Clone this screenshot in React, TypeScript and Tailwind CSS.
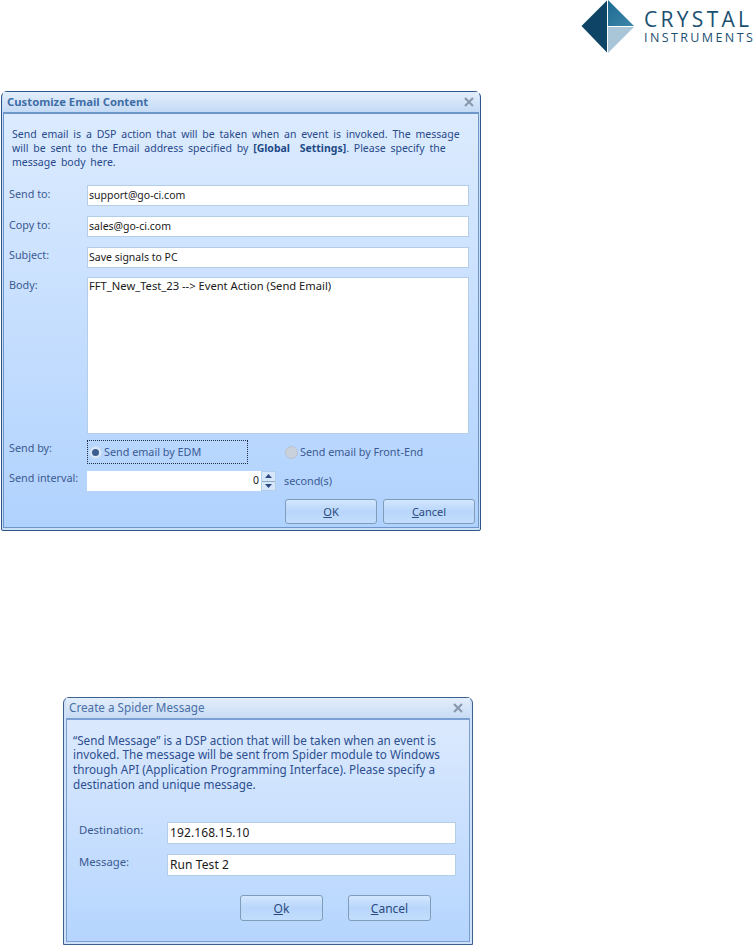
import React from "react";

const font = "font-['Noto_Sans','Open_Sans',sans-serif]";

function Logo() {
  return (
    <div className="flex h-[53px] justify-end">
      <div className="flex items-start">
        <svg width="54" height="53" viewBox="0 0 54 53" className="mr-[9px] block">
          <defs>
            <linearGradient id="tr" x1="0" y1="0" x2="1" y2="1">
              <stop offset="0" stopColor="#1d6a92" />
              <stop offset="1" stopColor="#3d87a8" />
            </linearGradient>
          </defs>
          <polygon points="0.5,26 26,0.5 26,52.5" fill="#0e4465" />
          <polygon points="27,0 53,26 27,26" fill="url(#tr)" />
          <polygon points="27,27 53,27 27,53" fill="#a9c5d8" />
        </svg>
        <div className="w-[112px] font-['Open_Sans',sans-serif] text-[#1b4f70]">
          <div className="mt-[8px] h-[22px] text-[21px] leading-[22px] tracking-[3.3px] whitespace-nowrap">CRYSTAL</div>
          <div className="mt-[1px] h-[13px] text-[12.5px] leading-[13px] tracking-[2.4px] whitespace-nowrap">INSTRUMENTS</div>
        </div>
      </div>
    </div>
  );
}

function CloseX({ color = "#8a99ad" }: { color?: string }) {
  return (
    <svg width="10" height="10" viewBox="0 0 10 10" className="block">
      <path d="M1 1 L9 9 M9 1 L1 9" stroke={color} strokeWidth="2.2" />
    </svg>
  );
}

function Field({ value, className = "" }: { value: string; className?: string }) {
  return (
    <div className={`flex items-center border border-[#b4cde9] bg-white pl-[1px] text-[#1a1a1a] ${className}`}>
      {value}
    </div>
  );
}

function Button({ mn, rest, className = "" }: { mn: string; rest: string; className?: string }) {
  return (
    <div
      className={`flex items-center justify-center rounded-[3px] border border-[#7f9db9] bg-gradient-to-b from-[#d3e6fd] via-[#b8d6fb] to-[#c3defd] text-[#2c4a80] ${className}`}
    >
      <span>
        <span className="underline">{mn}</span>
        {rest}
      </span>
    </div>
  );
}

function Row({ label, children, className = "", labelClass = "pt-[2px]" }: { label: string; children: React.ReactNode; className?: string; labelClass?: string }) {
  return (
    <div className={`flex ${className}`}>
      <div className={`w-[78px] shrink-0 text-[10.8px] leading-[14px] text-[#3b5a92] ${labelClass}`}>{label}</div>
      {children}
    </div>
  );
}

function Radio({ on }: { on: boolean }) {
  return (
    <span className={`mr-[2px] flex h-[13px] w-[13px] items-center justify-center rounded-full border ${on ? "border-[#c9dcf3] bg-[#dbe8f8]" : "border-[#b9c2cc] bg-[#c9d2dc]"}`}>
      {on && <span className="h-[7px] w-[7px] rounded-full bg-[#3f5f8f]" />}
    </span>
  );
}

function EmailDialog() {
  return (
    <div className="ml-[1px] mt-[38px] h-[440px] w-[480px] rounded-t-[6px] rounded-b-[2px] border border-[#2f5688] bg-[#c9dff8] px-[1px] pb-[2px]">
      <div className="flex h-[20px] items-center justify-between bg-gradient-to-b from-[#e3eefb] to-[#c4daf5] pl-[4px] pr-[5px]">
        <span className="text-[11.3px] font-bold text-[#3f6ea6]">Customize Email Content</span>
        <CloseX />
      </div>
      <div className="h-[416px] border border-[#6f96c9] border-t-2 bg-gradient-to-b from-[#dcebfe] to-[#b0d2fe] pl-[5px] pr-[7px]">
        <p className="pl-[3px] pt-[13px] text-[10.5px] leading-[14px] text-[#28498a] whitespace-nowrap [word-spacing:2.1px]">
          Send email is a DSP action that will be taken when an event is invoked. The message
          <br />
          will be sent to the Email address specified by <b className="text-[#1f4a86]">[Global&nbsp; Settings]</b>. Please specify the
          <br />
          message body here.
        </p>
        <div className="mt-[16px] flex flex-col">
          <Row label="Send to:"><Field value="support@go-ci.com" className="h-[21px] w-[382px] text-[10.5px]" /></Row>
          <Row label="Copy to:" className="mt-[10px]"><Field value="sales@go-ci.com" className="h-[21px] w-[382px] text-[10.5px]" /></Row>
          <Row label="Subject:" className="mt-[10px]" labelClass="pt-[1px]"><Field value="Save signals to PC" className="h-[21px] w-[382px] text-[10.5px]" /></Row>
          <Row label="Body:" className="mt-[9px]" labelClass="pt-[1px]">
            <div className="h-[157px] w-[382px] border border-[#b4cde9] bg-white pl-[1px] pt-[1px] text-[11.2px] leading-[14px] text-[#1a1a1a]">
              FFT_New_Test_23 --&gt; Event Action (Send Email)
            </div>
          </Row>
          <Row label="Send by:" className="mt-[6px]" labelClass="pt-[1px]">
            <div className="flex h-[24px] w-[161px] items-center border border-dotted border-[#1c2d44] pl-[1px] text-[10.8px] text-[#3b5a92]">
              <Radio on />
              Send email by EDM
            </div>
            <div className="ml-[37px] flex h-[24px] items-center text-[10.8px] text-[#3b5a92]">
              <Radio on={false} />
              Send email by Front-End
            </div>
          </Row>
          <Row label="Send interval:" className="mt-[7px]" labelClass="pt-0">
            <div className="flex h-[20px] w-[189px]">
              <div className="flex flex-1 items-center justify-end bg-white pr-[2px] text-[10.5px] text-[#1a1a1a]">0</div>
              <div className="flex w-[15px] flex-col border border-[#b4cde9] bg-[#d7e7fb]">
                <div className="flex flex-1 items-center justify-center border-b border-[#8fa9c9]">
                  <svg width="7" height="4" viewBox="0 0 7 4"><path d="M3.5 0 L7 4 H0 Z" fill="#2c4a80" /></svg>
                </div>
                <div className="flex flex-1 items-center justify-center">
                  <svg width="7" height="4" viewBox="0 0 7 4"><path d="M0 0 H7 L3.5 4 Z" fill="#2c4a80" /></svg>
                </div>
              </div>
            </div>
            <div className="ml-[8px] flex items-center text-[10.8px] text-[#3b5a92]">second(s)</div>
          </Row>
          <div className="mr-[-4px] mt-[8px] flex justify-end gap-[6px]">
            <Button mn="O" rest="K" className="h-[25px] w-[92px] pt-[1px] text-[11px]" />
            <Button mn="C" rest="ancel" className="h-[25px] w-[92px] pt-[1px] text-[11px]" />
          </div>
        </div>
      </div>
    </div>
  );
}

function Row2({ label, value, className = "" }: { label: string; value: string; className?: string }) {
  return (
    <div className={`flex ${className}`}>
      <div className="w-[88px] shrink-0 pt-[1px] text-[11.3px] leading-[14px] text-[#3b5a92]">{label}</div>
      <Field value={value} className="h-[22px] w-[289px] pl-[2px] text-[12px] tracking-[0.1px]" />
    </div>
  );
}

function SpiderDialog() {
  return (
    <div className="ml-[63px] mt-[166px] h-[248px] w-[410px] rounded-t-[6px] border border-[#3d6290] bg-[#cfe1f8] px-[2px] pb-[2px]">
      <div className="flex h-[20px] items-center justify-between bg-gradient-to-b from-[#e3eefb] to-[#c8dcf5] pl-[3px] pr-[7px]">
        <span className="text-[11.7px] text-[#4a6fa5]">Create a Spider Message</span>
        <CloseX />
      </div>
      <div className="h-[224px] border border-[#7a9fd0] border-t-2 bg-gradient-to-b from-[#dbe9fd] to-[#b5d5fe] pl-[6px]">
        <p className="pt-[12.5px] text-[11.7px] leading-[14.7px] text-[#2c4f8f] whitespace-nowrap">
          “Send Message” is a DSP action that will be taken when an event is
          <br />
          invoked. The message will be sent from Spider module to Windows
          <br />
          through API (Application Programming Interface). Please specify a
          <br />
          destination and unique message.
        </p>
        <div className="mt-[31px] flex flex-col pl-[6px]">
          <Row2 label="Destination:" value="192.168.15.10" />
          <Row2 label="Message:" value="Run Test 2" className="mt-[10px]" />
          <div className="ml-[161px] mt-[19px] flex gap-[25px]">
            <Button mn="O" rest="k" className="h-[26px] w-[83px] pt-[1px] text-[12px]" />
            <Button mn="C" rest="ancel" className="h-[26px] w-[83px] pt-[1px] text-[12px]" />
          </div>
        </div>
      </div>
    </div>
  );
}

export default function App() {
  return (
    <div className={`h-[945px] w-[756px] overflow-hidden bg-white ${font}`}>
      <Logo />
      <EmailDialog />
      <SpiderDialog />
    </div>
  );
}
